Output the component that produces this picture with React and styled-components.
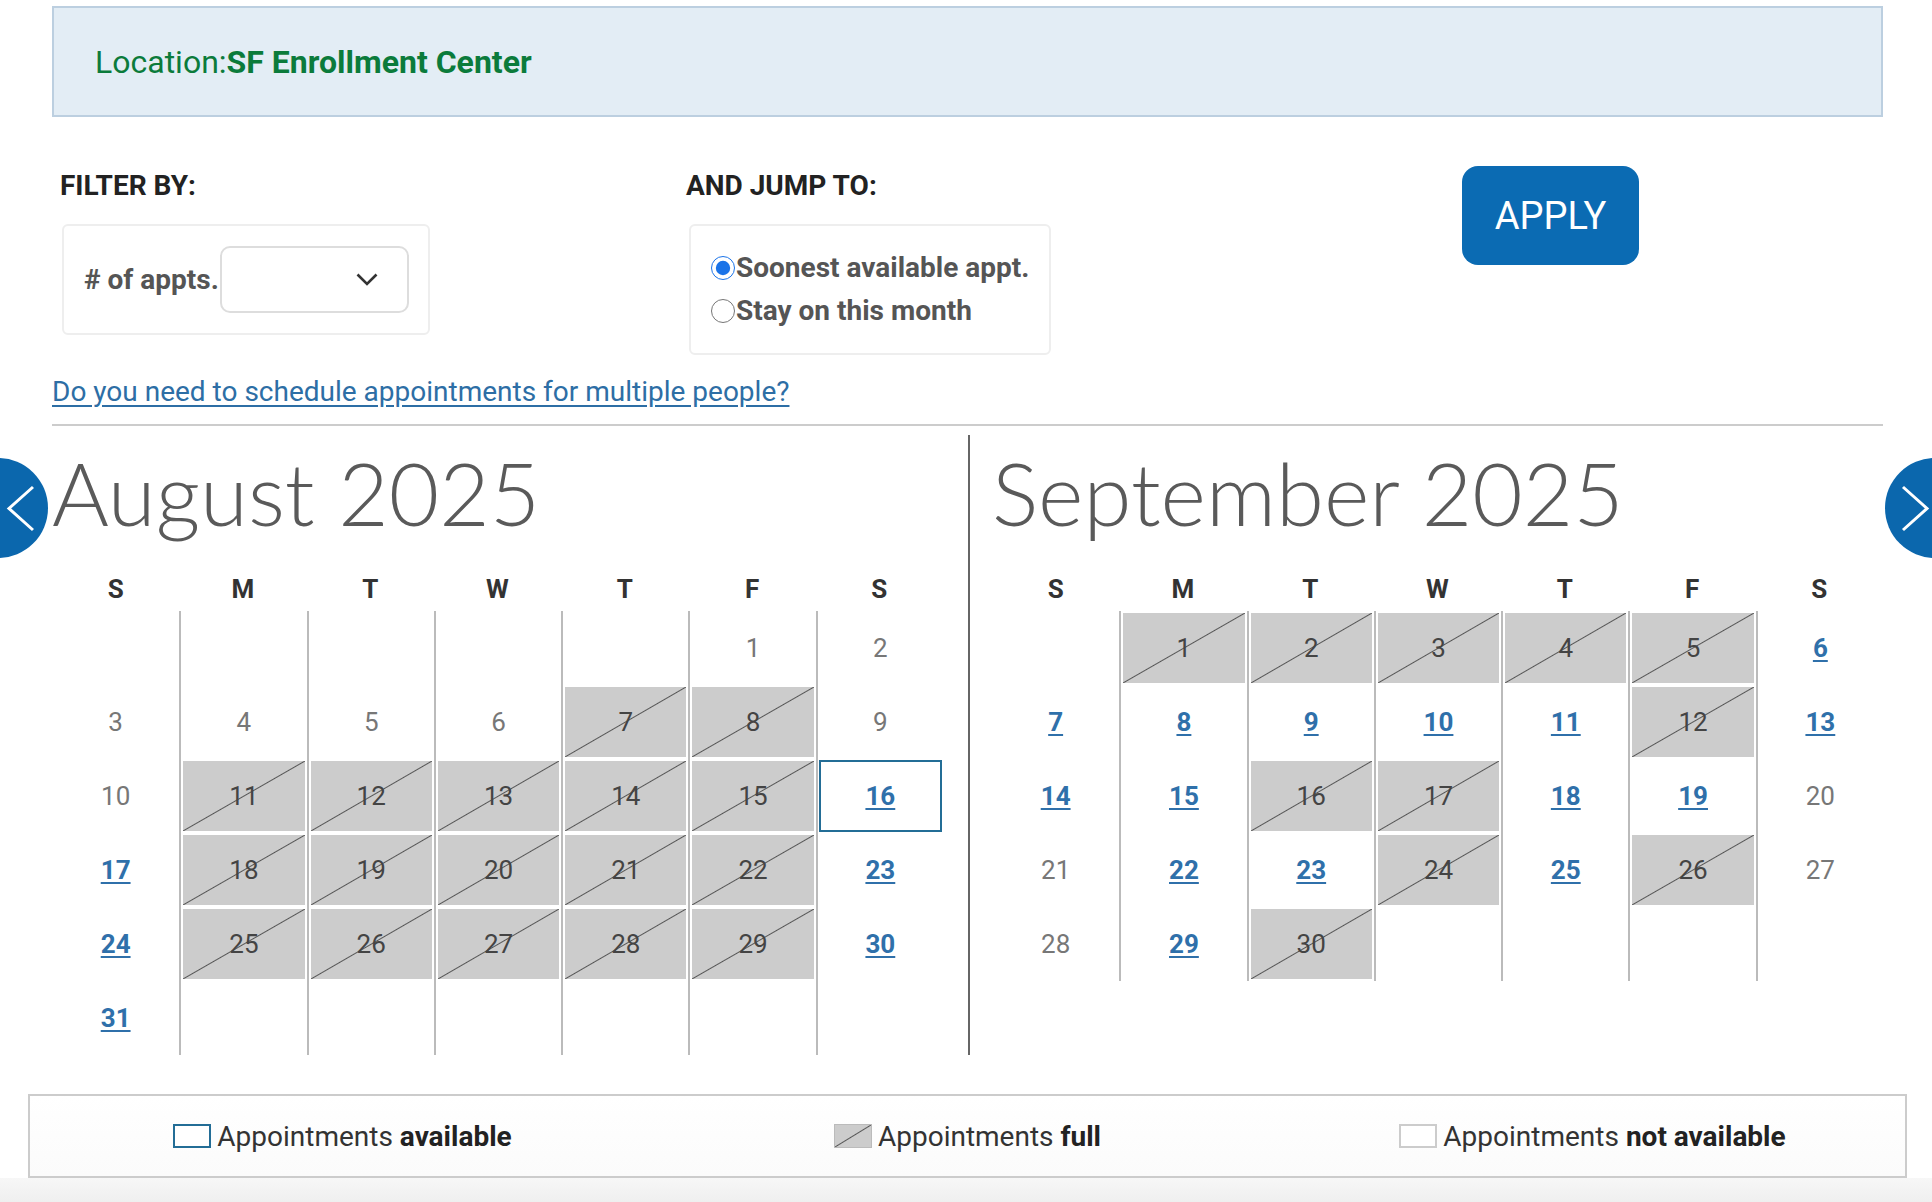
import React from 'react'
import styled, { createGlobalStyle } from 'styled-components'

const GlobalStyle = createGlobalStyle`
  body {
    margin: 0;
    background: #fff;
    font-family: Roboto, "Liberation Sans", sans-serif;
  }
`

const Page = styled.div`
  width: 1932px;
  height: 1202px;
  padding-top: 6px;
  box-sizing: border-box;
  overflow: hidden;
  display: flex;
  flex-direction: column;
`

const Main = styled.div`
  margin: 0 49px 0 52px;
`

const LocationBar = styled.div`
  height: 111px;
  box-sizing: border-box;
  border: 2px solid #bccfe0;
  background: #e3edf5;
  padding-left: 41px;
  display: flex;
  align-items: center;
  font-size: 32px;
  color: #0b7b3b;

  b {
    font-weight: 700;
  }
`

const Controls = styled.div`
  display: flex;
  margin-top: 49px;
`

const Col = styled.div`
  width: ${p => p.$width}px;
  padding-left: ${p => p.$indent}px;
  box-sizing: border-box;
  padding-top: 4px;
`

const Heading = styled.div`
  font-size: 28px;
  line-height: 32px;
  font-weight: 700;
  color: #222;
  margin-bottom: 22px;
`

const Panel = styled.div`
  width: ${p => p.$width}px;
  height: ${p => p.$height}px;
  margin-left: ${p => p.$shift}px;
  box-sizing: border-box;
  border: 2px solid #eee;
  border-radius: 6px;
  display: flex;
  flex-direction: ${p => (p.$column ? 'column' : 'row')};
  justify-content: ${p => (p.$column ? 'center' : 'flex-start')};
  align-items: ${p => (p.$column ? 'flex-start' : 'center')};
  gap: 11px;
  padding-left: 20px;
  font-size: 28px;
  font-weight: 700;
  color: #555;
`

const SelectWrap = styled.div`
  position: relative;
  width: 189px;
  height: 67px;
  margin-left: -10px;
`

const Select = styled.select`
  appearance: none;
  width: 100%;
  height: 100%;
  border: 2px solid #ddd;
  border-radius: 10px;
  background: #fff;
  font: inherit;
`

const Caret = styled.svg`
  position: absolute;
  right: 31px;
  top: 27px;
  pointer-events: none;
`

const RadioRow = styled.label`
  display: flex;
  align-items: center;
  line-height: 32px;

  input {
    width: 24px;
    height: 24px;
    margin: 0 1px 0 0;
    accent-color: #1a73e8;
  }
`

const ApplyButton = styled.button`
  width: 177px;
  height: 99px;
  border: none;
  border-radius: 16px;
  background: #0b6bb3;
  color: #fff;
  font-family: Roboto, "Liberation Sans", sans-serif;
  font-size: 38px;
  cursor: pointer;
`

const MultiLink = styled.a`
  display: inline-block;
  margin-top: 21px;
  font-size: 28px;
  line-height: 32px;
  color: #2d6ea5;
  text-decoration: underline;
  text-underline-offset: 4px;
`

const Rule = styled.hr`
  margin: 16px 0 0;
  border: none;
  border-top: 2px solid #ccc;
`

const Calendars = styled.div`
  position: relative;
  display: flex;
`

const Month = styled.div`
  width: 892px;
`

const MonthTitle = styled.h2`
  margin: 23px 0 0;
  font-family: Lato, "Liberation Sans", sans-serif;
  font-weight: 300;
  font-size: 87px;
  line-height: 88px;
  color: #5a5a5a;
  white-space: nowrap;
`

const WeekRow = styled.div`
  display: grid;
  grid-template-columns: repeat(7, 1fr);
  margin: 37px 0 7px;
  font-size: 26px;
  line-height: 30px;
  font-weight: 700;
  color: #333;
  text-align: center;
`

const DayGrid = styled.div`
  display: grid;
  grid-template-columns: repeat(7, 1fr);
  grid-auto-rows: 74px;
`

const Cell = styled.div`
  border-left: ${p => (p.$line ? '2px solid #bbb' : 'none')};
  padding: ${p => (p.$selected ? '1px' : '2px')};
  display: flex;
`

const Day = styled.div`
  flex: 1;
  display: flex;
  align-items: center;
  justify-content: center;
  font-size: 26px;
  font-weight: ${p => (p.$kind === 'o' ? 700 : 400)};
  color: ${p => (p.$kind === 'f' ? '#444' : p.$kind === 'o' ? '#2f70aa' : '#777')};
  background: ${p =>
    p.$kind === 'f'
      ? 'linear-gradient(to bottom right, transparent calc(50% - 1px), #555 50%, transparent calc(50% + 1px)), #ccc'
      : 'transparent'};
  border: ${p => (p.$selected ? '2px solid #236d96' : 'none')};

  a {
    color: inherit;
    text-decoration: underline;
    text-underline-offset: 3px;
  }
`

const Divider = styled.div`
  width: 2px;
  height: 620px;
  margin: 9px 22px 0 25px;
  background: #666;
`

const NavCircle = styled.button`
  position: absolute;
  top: 32px;
  ${p => (p.$side === 'left' ? 'left: -104px;' : 'right: -102px;')}
  width: 100px;
  height: 100px;
  padding: 0;
  border: none;
  border-radius: 50%;
  background: #0b67ad;
  cursor: pointer;

  svg {
    display: block;
  }
`

const Legend = styled.div`
  margin: 39px 0 0 28px;
  width: 1879px;
  height: 84px;
  box-sizing: border-box;
  border: 2px solid #ccc;
  background: linear-gradient(#fff, #fbfbfb);
  display: grid;
  grid-template-columns: repeat(3, 1fr);
  align-items: center;
  justify-items: center;
`

const LegendItem = styled.div`
  display: flex;
  align-items: center;
  gap: 6px;
  font-size: 28px;
  color: #333;

  b {
    color: #222;
  }
`

const Swatch = styled.span`
  width: 38px;
  height: 24px;
  box-sizing: border-box;
  border: ${p =>
    p.$kind === 'o' ? '2px solid #236d96' : p.$kind === 'f' ? '1px solid #bbb' : '2px solid #ccc'};
  background: ${p =>
    p.$kind === 'f'
      ? 'linear-gradient(to bottom right, transparent calc(50% - 1px), #555 50%, transparent calc(50% + 1px)), #ccc'
      : '#fff'};
`

const Footer = styled.div`
  flex: 1;
  background: linear-gradient(#f7f7f7, #efefef);
`

// n = not available, f = full, o = open
const months = [
  {
    title: 'August 2025',
    lead: 5,
    rows: 6,
    days: 'nnnnnnffnnfffffoofffffoofffffoo',
    selected: 16,
  },
  {
    title: 'September 2025',
    lead: 1,
    rows: 5,
    days: 'fffffoooooofoooffoonnoofofnnof',
  },
]

const weekdays = ['S', 'M', 'T', 'W', 'T', 'F', 'S']

const MonthView = ({ month }) => {
  const cells = []
  const total = month.rows * 7
  for (let i = 0; i < total; i++) {
    const n = i - month.lead + 1
    const kind = n >= 1 && n <= month.days.length ? month.days[n - 1] : null
    const selected = n === month.selected
    cells.push(
      <Cell key={i} $line={i % 7 !== 0} $selected={selected}>
        {kind && (
          <Day $kind={kind} $selected={selected}>
            {kind === 'o' ? <a href="#">{n}</a> : n}
          </Day>
        )}
      </Cell>
    )
  }
  return (
    <Month>
      <MonthTitle>{month.title}</MonthTitle>
      <WeekRow>
        {weekdays.map((d, i) => (
          <span key={i}>{d}</span>
        ))}
      </WeekRow>
      <DayGrid>{cells}</DayGrid>
    </Month>
  )
}

const App = () => {
  return (
    <Page>
      <GlobalStyle />
      <Main>
        <LocationBar>
          Location:<b>SF Enrollment Center</b>
        </LocationBar>

        <Controls>
          <Col $width={634} $indent={8}>
            <Heading>FILTER BY:</Heading>
            <Panel $width={368} $height={111} $shift={2}>
              <span># of appts.</span>
              <SelectWrap>
                <Select aria-label="Number of appointments" defaultValue="">
                  <option value=""></option>
                </Select>
                <Caret width="22" height="13" viewBox="0 0 22 13">
                  <polyline points="1.5,1.5 11,11 20.5,1.5" fill="none" stroke="#333" strokeWidth="2.6" />
                </Caret>
              </SelectWrap>
            </Panel>
          </Col>
          <Col $width={776} $indent={0}>
            <Heading>AND JUMP TO:</Heading>
            <Panel $width={362} $height={131} $shift={3} $column>
              <RadioRow>
                <input type="radio" name="jump" defaultChecked />
                Soonest available appt.
              </RadioRow>
              <RadioRow>
                <input type="radio" name="jump" />
                Stay on this month
              </RadioRow>
            </Panel>
          </Col>
          <ApplyButton>APPLY</ApplyButton>
        </Controls>

        <MultiLink href="#">Do you need to schedule appointments for multiple people?</MultiLink>
        <Rule />

        <Calendars>
          <NavCircle $side="left" aria-label="Previous month">
            <svg width="100" height="100" viewBox="0 0 100 100">
              <polyline points="85,29 61,50.5 85,72" fill="none" stroke="#fff" strokeWidth="3" />
            </svg>
          </NavCircle>
          <MonthView month={months[0]} />
          <Divider />
          <MonthView month={months[1]} />
          <NavCircle $side="right" aria-label="Next month">
            <svg width="100" height="100" viewBox="0 0 100 100">
              <polyline points="18,29 42,50.5 18,72" fill="none" stroke="#fff" strokeWidth="3" />
            </svg>
          </NavCircle>
        </Calendars>
      </Main>

      <Legend>
        <LegendItem>
          <Swatch $kind="o" />
          <span>
            Appointments <b>available</b>
          </span>
        </LegendItem>
        <LegendItem>
          <Swatch $kind="f" />
          <span>
            Appointments <b>full</b>
          </span>
        </LegendItem>
        <LegendItem>
          <Swatch $kind="n" />
          <span>
            Appointments <b>not available</b>
          </span>
        </LegendItem>
      </Legend>
      <Footer />
    </Page>
  )
}

export default App
